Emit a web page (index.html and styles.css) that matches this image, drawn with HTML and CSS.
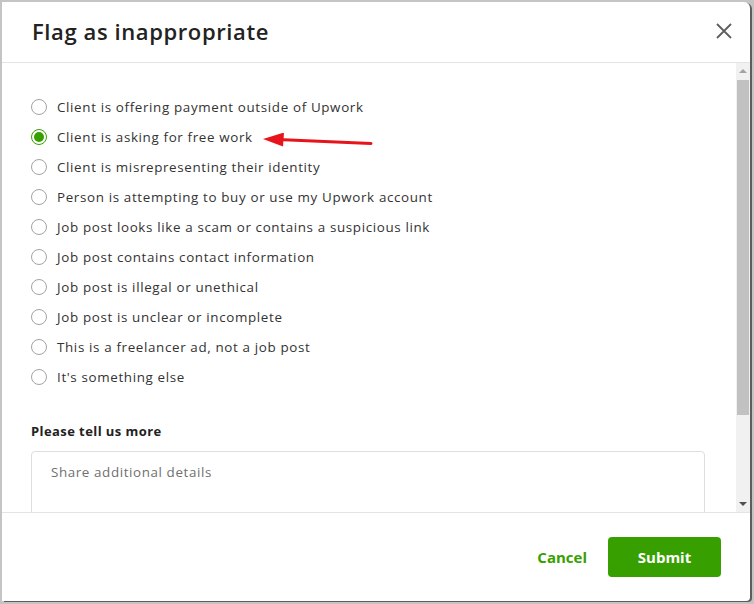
FILE: index.html
```html
<!DOCTYPE html>
<html>
<head>
<meta charset="utf-8">
<link rel="stylesheet" href="styles.css">
</head>
<body>
<div class="modal">
  <div class="header">
    <h1 class="title">Flag as inappropriate</h1>
    <svg class="close" width="16" height="16" viewBox="0 0 16 16"><path d="M1 1 L15 15 M15 1 L1 15" stroke="#5e5e5e" stroke-width="1.8" fill="none"/></svg>
  </div>
  <div class="main">
    <div class="content">
      <div class="options">
        <label class="opt"><span class="radio"></span>Client is offering payment outside of Upwork</label>
        <label class="opt"><span class="radio checked"></span>Client is asking for free work</label>
        <label class="opt"><span class="radio"></span>Client is misrepresenting their identity</label>
        <label class="opt"><span class="radio"></span>Person is attempting to buy or use my Upwork account</label>
        <label class="opt"><span class="radio"></span>Job post looks like a scam or contains a suspicious link</label>
        <label class="opt"><span class="radio"></span>Job post contains contact information</label>
        <label class="opt"><span class="radio"></span>Job post is illegal or unethical</label>
        <label class="opt"><span class="radio"></span>Job post is unclear or incomplete</label>
        <label class="opt"><span class="radio"></span>This is a freelancer ad, not a job post</label>
        <label class="opt"><span class="radio"></span>It's something else</label>
      </div>
      <div class="more-label">Please tell us more</div>
      <div class="textarea">Share additional details</div>
      <svg class="arrow" width="120" height="20" viewBox="0 0 120 20"><path d="M16 6.5 L109 10.5" stroke="#e8141c" stroke-width="3" stroke-linecap="round" fill="none"/><path d="M1 6 L22 -0.5 L21 13.5 Z" fill="#e8141c"/></svg>
    </div>
    <div class="scrollbar">
      <div class="sb-up"></div>
      <div class="sb-track"><div class="sb-thumb"></div></div>
      <div class="sb-down"></div>
    </div>
  </div>
  <div class="footer">
    <span class="cancel">Cancel</span>
    <span class="submit">Submit</span>
  </div>
</div>
</body>
</html>
```

FILE: styles.css
```css
html, body {
  margin: 0;
  padding: 0;
}
body {
  width: 754px;
  height: 604px;
  background: #c4c4c4;
  font-family: "Open Sans", "Liberation Sans", sans-serif;
  overflow: hidden;
  position: relative;
}
.modal {
  position: absolute;
  left: 2px;
  top: 2px;
  width: 748px;
  height: 599px;
  background: #fff;
  border-top-right-radius: 6px;
  border-bottom-right-radius: 4px;
  box-shadow: 2px 1px 0 #5d5d5d;
  display: flex;
  flex-direction: column;
  overflow: hidden;
}
.header {
  height: 60px;
  flex: none;
  border-bottom: 1px solid #e4e4e4;
  display: flex;
  align-items: center;
  justify-content: space-between;
  padding: 0 18px 0 30px;
}
.title {
  margin: 0;
  font-size: 22px;
  font-weight: 600;
  color: #222;
  letter-spacing: 0.6px;
  padding-bottom: 2px;
}
.close {
  margin-top: -2px;
}
.main {
  flex: 1;
  display: flex;
  min-height: 0;
}
.content {
  flex: 1;
  position: relative;
  padding: 29px 31px 0 29px;
  overflow: hidden;
}
.options {
  display: flex;
  flex-direction: column;
}
.opt {
  height: 30px;
  display: flex;
  align-items: center;
  font-size: 13.4px;
  color: #333;
  letter-spacing: 0.64px;
}
.radio {
  width: 14px;
  height: 14px;
  border: 1px solid #a3a3a3;
  border-radius: 50%;
  margin-right: 10px;
  box-sizing: content-box;
  flex: none;
  position: relative;
}
.radio.checked {
  border-color: #37a000;
}
.radio.checked::after {
  content: "";
  position: absolute;
  left: 2px;
  top: 2px;
  width: 10px;
  height: 10px;
  border-radius: 50%;
  background: #37a000;
}
.more-label {
  margin-top: 30px;
  font-size: 13px;
  font-weight: 700;
  color: #222;
  letter-spacing: 0.42px;
}
.textarea {
  margin-top: 11px;
  height: 100px;
  border: 1px solid #dedede;
  border-radius: 4px;
  padding: 11px 19px;
  font-size: 13.4px;
  color: #6f6f6f;
  letter-spacing: 0.6px;
}
.arrow {
  position: absolute;
  left: 260px;
  top: 70px;
}
.scrollbar {
  width: 14px;
  flex: none;
  background: #f1f1f1;
  display: flex;
  flex-direction: column;
}
.sb-up, .sb-down {
  height: 17px;
  flex: none;
  position: relative;
}
.sb-up::after {
  content: "";
  position: absolute;
  left: 3px;
  top: 6px;
  border-left: 4px solid transparent;
  border-right: 4px solid transparent;
  border-bottom: 4px solid #a3a3a3;
}
.sb-down::after {
  content: "";
  position: absolute;
  left: 3px;
  top: 7px;
  border-left: 4px solid transparent;
  border-right: 4px solid transparent;
  border-top: 4px solid #505050;
}
.sb-track {
  flex: 1;
  padding: 0 1px;
}
.sb-thumb {
  height: 335px;
  background: #c1c1c1;
}
.footer {
  flex: none;
  height: 88px;
  border-top: 1px solid #e4e4e4;
  display: flex;
  align-items: center;
  justify-content: flex-end;
  padding-right: 29px;
  gap: 21px;
}
.cancel {
  color: #37a000;
  font-weight: 700;
  font-size: 15px;
}
.submit {
  width: 113px;
  height: 40px;
  border-radius: 4px;
  background: #37a000;
  color: #fff;
  font-weight: 700;
  font-size: 15px;
  display: flex;
  align-items: center;
  justify-content: center;
}
```
